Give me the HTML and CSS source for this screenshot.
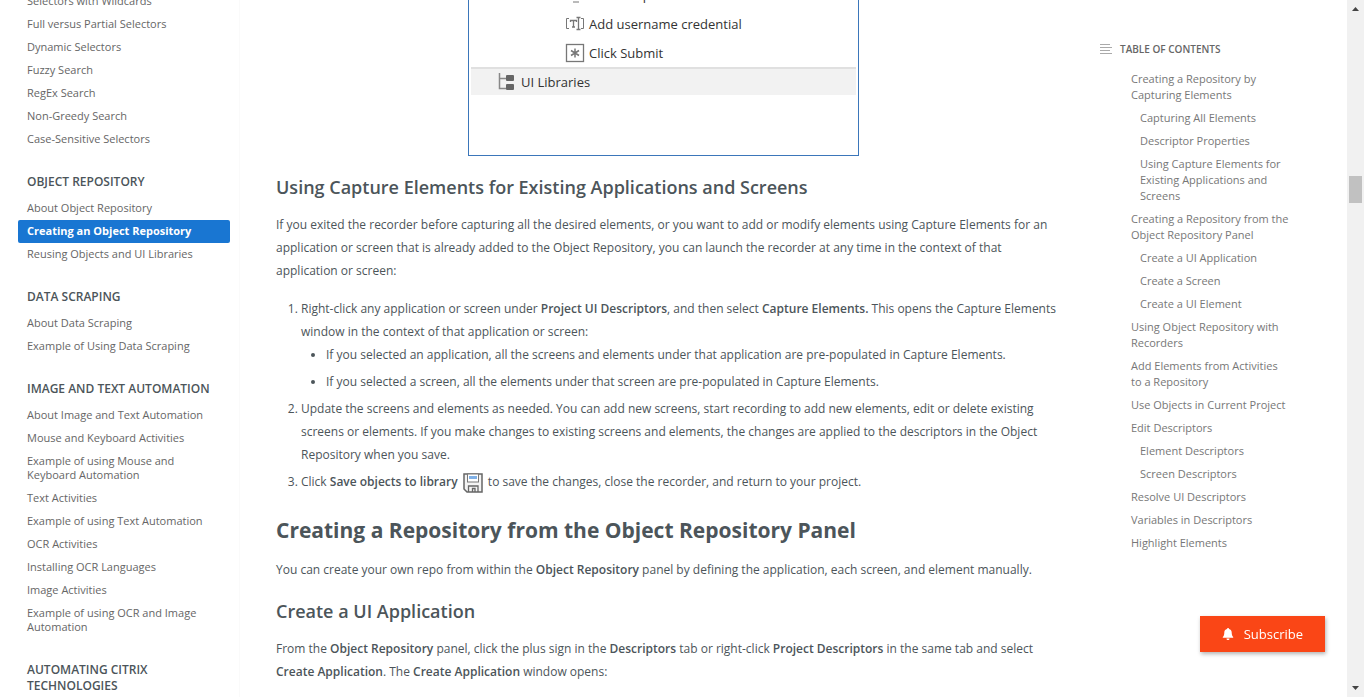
FILE: index.html
```
<!DOCTYPE html>
<html lang="en">
<head>
<meta charset="utf-8">
<title>Creating an Object Repository</title>
<link rel="stylesheet" href="styles.css">
</head>
<body>
<div class="page">
  <nav class="sidebar" aria-label="Documentation">
    <ul class="nav-list">
      <li><a href="#">Selectors with Wildcards</a></li>
      <li><a href="#">Full versus Partial Selectors</a></li>
      <li><a href="#">Dynamic Selectors</a></li>
      <li><a href="#">Fuzzy Search</a></li>
      <li><a href="#">RegEx Search</a></li>
      <li><a href="#">Non-Greedy Search</a></li>
      <li><a href="#">Case-Sensitive Selectors</a></li>
    </ul>
    <h4 class="nav-title">Object Repository</h4>
    <ul class="nav-list">
      <li><a href="#">About Object Repository</a></li>
      <li><a href="#" class="active" aria-current="page">Creating an Object Repository</a></li>
      <li><a href="#">Reusing Objects and UI Libraries</a></li>
    </ul>
    <h4 class="nav-title">Data Scraping</h4>
    <ul class="nav-list">
      <li><a href="#">About Data Scraping</a></li>
      <li><a href="#">Example of Using Data Scraping</a></li>
    </ul>
    <h4 class="nav-title">Image and Text Automation</h4>
    <ul class="nav-list">
      <li><a href="#">About Image and Text Automation</a></li>
      <li><a href="#">Mouse and Keyboard Activities</a></li>
      <li><a href="#">Example of using Mouse and Keyboard Automation</a></li>
      <li><a href="#">Text Activities</a></li>
      <li><a href="#">Example of using Text Automation</a></li>
      <li><a href="#">OCR Activities</a></li>
      <li><a href="#">Installing OCR Languages</a></li>
      <li><a href="#">Image Activities</a></li>
      <li><a href="#">Example of using OCR and Image Automation</a></li>
    </ul>
    <h4 class="nav-title">Automating Citrix Technologies</h4>
  </nav>

  <main class="content">
    <div class="figure">
      <div class="tree-panel">
        <div class="tree-row tree-leaf">
          <svg class="tree-icon" viewBox="0 0 20 20" aria-hidden="true"><path d="M8 17H14" fill="none" stroke="#777"/></svg>
          <span>Click Dropdown</span>
        </div>
        <div class="tree-row tree-leaf">
          <svg class="tree-icon" viewBox="0 0 20 20" fill="none" stroke="#777" aria-hidden="true"><path d="M4 4.500H1.500V14.500H4M16 4.500H18.500V14.500H16"/><path d="M5.500 8V6.500H11.500V8M8.500 6.500V13M7 13H10" stroke-width="1.300"/><path d="M11.500 3.500H15.500M13.500 3.500V15.500M11.500 15.500H15.500" stroke-width="1.300"/></svg>
          <span>Add username credential</span>
        </div>
        <div class="tree-row tree-leaf">
          <svg class="tree-icon" viewBox="0 0 20 20" fill="none" stroke="#777" aria-hidden="true"><rect x="1.500" y="1.500" width="17" height="17" stroke-width="1.300"/><path d="M10 5.500V14.500M6 7.500L14 12.500M14 7.500L6 12.500" stroke-width="1.500"/></svg>
          <span>Click Submit</span>
        </div>
        <div class="tree-row tree-root">
          <svg class="tree-icon" viewBox="0 0 20 20" aria-hidden="true"><path d="M2.500 1V16.500H9M2.500 6.500H9" fill="none" stroke="#888" stroke-width="1.500"/><rect x="9" y="3" width="8" height="6" rx="1" fill="#666"/><rect x="9" y="12" width="8" height="6" rx="1" fill="#666"/></svg>
          <span>UI Libraries</span>
        </div>
      </div>
    </div>

    <h3>Using Capture Elements for Existing Applications and Screens</h3>
    <p>If you exited the recorder before capturing all the desired elements, or you want to add or modify elements using Capture Elements for an application or screen that is already added to the Object Repository, you can launch the recorder at any time in the context of that application or screen:</p>
    <ol>
      <li>Right-click any application or screen under <strong>Project UI Descriptors</strong>, and then select <strong>Capture Elements.</strong> This opens the Capture Elements window in the context of that application or screen:
        <ul>
          <li>If you selected an application, all the screens and elements under that application are pre-populated in Capture Elements.</li>
          <li>If you selected a screen, all the elements under that screen are pre-populated in Capture Elements.</li>
        </ul>
      </li>
      <li>Update the screens and elements as needed. You can add new screens, start recording to add new elements, edit or delete existing screens or elements. If you make changes to existing screens and elements, the changes are applied to the descriptors in the Object Repository when you save.</li>
      <li>Click <strong>Save objects to library</strong> <svg class="save-icon" viewBox="0 0 20 20" aria-hidden="true"><path d="M1 1H19V19H4L1 16Z" fill="#f4f4f4" stroke="#666" stroke-width="1.500"/><rect x="4.500" y="1" width="11" height="8" fill="#fff" stroke="#777"/><rect x="6" y="3" width="8" height="3" fill="#7fb0e6"/><path d="M5.500 19V13H15V19M9.500 19V15.500H12V19" fill="none" stroke="#666" stroke-width="1.300"/></svg> to save the changes, close the recorder, and return to your project.</li>
    </ol>
    <h2>Creating a Repository from the Object Repository Panel</h2>
    <p>You can create your own repo from within the <strong>Object Repository</strong> panel by defining the application, each screen, and element manually.</p>
    <h3>Create a UI Application</h3>
    <p>From the <strong>Object Repository</strong> panel, click the plus sign in the <strong>Descriptors</strong> tab or right-click <strong>Project Descriptors</strong> in the same tab and select <strong>Create Application</strong>. The <strong>Create Application</strong> window opens:</p>
  </main>

  <aside class="toc" aria-labelledby="toc-title">
    <div class="toc-head">
      <svg class="toc-icon" viewBox="0 0 12 12" aria-hidden="true"><path d="M0 1.500H10M0 4.500H12M0 7.500H10M0 10.500H12" stroke="#aaa" fill="none"/></svg>
      <h4 id="toc-title">Table of Contents</h4>
    </div>
    <ul class="toc-list">
      <li><a href="#">Creating a Repository by Capturing Elements</a></li>
      <li class="sub"><a href="#">Capturing All Elements</a></li>
      <li class="sub"><a href="#">Descriptor Properties</a></li>
      <li class="sub"><a href="#">Using Capture Elements for Existing Applications and Screens</a></li>
      <li><a href="#">Creating a Repository from the Object Repository Panel</a></li>
      <li class="sub"><a href="#">Create a UI Application</a></li>
      <li class="sub"><a href="#">Create a Screen</a></li>
      <li class="sub"><a href="#">Create a UI Element</a></li>
      <li><a href="#">Using Object Repository with Recorders</a></li>
      <li><a href="#">Add Elements from Activities to&nbsp;a&nbsp;Repository</a></li>
      <li><a href="#">Use Objects in Current Project</a></li>
      <li><a href="#">Edit Descriptors</a></li>
      <li class="sub"><a href="#">Element Descriptors</a></li>
      <li class="sub"><a href="#">Screen Descriptors</a></li>
      <li><a href="#">Resolve UI Descriptors</a></li>
      <li><a href="#">Variables in Descriptors</a></li>
      <li><a href="#">Highlight Elements</a></li>
    </ul>
  </aside>

  <div class="scrollbar" aria-hidden="true">
    <svg class="arrow" viewBox="0 0 17 17"><path d="M5 11L8.500 7L12 11Z" fill="#444"/></svg>
    <div class="track"><div class="thumb"></div></div>
    <svg class="arrow" viewBox="0 0 17 17"><path d="M5 6L8.500 10L12 6Z" fill="#444"/></svg>
  </div>
</div>
<button class="subscribe" type="button">
  <svg class="bell" viewBox="0 0 12 12" aria-hidden="true"><path d="M6 0C6.600 0 7 .4 7 .9C8.800 1.300 9.700 2.700 9.700 4.500C9.700 7 10.200 8 11.200 9V9.700H.8V9C1.800 8 2.300 7 2.300 4.500C2.300 2.700 3.200 1.300 5 .9C5 .4 5.400 0 6 0ZM4.500 10.400H7.500C7.500 11.400 6.900 12 6 12S4.500 11.400 4.500 10.400Z" fill="#fff"/></svg>
  Subscribe
</button>
</body>
</html>
```
FILE: styles.css
```
* { box-sizing: border-box; }
body {
  margin: 0;
  height: 100vh;
  overflow: hidden;
  background: #fff;
  color: #4c555a;
  font: 12px/23px "Open Sans", "Noto Sans", sans-serif;
}
a { color: inherit; text-decoration: none; }
ul { list-style: none; margin: 0; padding: 0; }
h2, h3, h4, p { margin: 0; }
strong { font-weight: 600; }

.page { display: flex; height: 100vh; overflow: hidden; }

.sidebar {
  flex: 0 0 240px;
  margin-top: -10px;
  padding: 0 9px 0 18px;
  font-size: 11px;
  line-height: 14px;
  color: #666;
  border-right: 1px solid #fafafa;
}
.nav-list a { display: block; padding: 4px 9px 5px; }
.nav-list .active {
  background: #1976d2;
  border-radius: 2px;
  color: #fff;
  font-weight: 700;
}
.nav-title {
  margin: 23px 0 7px;
  padding: 0 60px 0 9px;
  font-size: 12px;
  line-height: 16px;
  font-weight: 600;
  color: #4c555a;
  text-transform: uppercase;
}
.nav-title:nth-of-type(3) { padding-right: 0; }

.content { flex: 1; min-width: 0; padding: 0 24px 0 36px; }
.figure { padding-right: 12px; }
.tree-panel {
  width: 391px;
  height: 177px;
  margin: -21px auto 19px;
  padding: 0 2px;
  border: 1px solid #3b76ba;
  color: #333;
  font-size: 13px;
  line-height: 26px;
}
.tree-row { display: flex; align-items: center; gap: 4px; }
.tree-leaf { padding-left: 94px; height: 29px; }
.tree-root { padding-left: 26px; gap: 4px; background: #f2f2f2; border-top: 2px solid #e0e0e0; }
.tree-icon { width: 20px; height: 20px; }

h3 { font-size: 18px; line-height: 24px; font-weight: 600; margin-bottom: 14px; }
h2 { font-size: 21px; line-height: 30px; font-weight: 700; margin: 22px 0 13px; }
.content p { margin-bottom: 15px; }
.content p + h3 { margin-top: 18px; }
ol { margin: 0; padding-left: 25px; }
ol > li { margin-bottom: 4px; }
.content ul { list-style: disc; padding-left: 25px; }
.content ul li { margin-bottom: 4px; }
.save-icon { width: 20px; height: 20px; margin: 0 2px; vertical-align: middle; }

.toc { flex: 0 0 260px; padding: 40px 50px 0 13px; font-size: 11px; line-height: 16px; color: #777; }
.toc-head { display: flex; align-items: center; gap: 8px; height: 18px; margin-bottom: 13px; }
.toc-head h4 { font-size: 10px; font-weight: 600; text-transform: uppercase; color: #666; }
.toc-icon { width: 12px; height: 12px; }
.toc-list { padding-left: 31px; }
.toc-list li { margin-bottom: 7px; }
.toc-list .sub { padding-left: 9px; }

.scrollbar { flex: 0 0 17px; display: flex; flex-direction: column; background: #f1f1f1; }
.arrow { width: 17px; height: 17px; }
.track { flex: 1; padding: 159px 2px 0; }
.thumb { height: 27px; background: #c1c1c1; }

.subscribe {
  position: fixed;
  right: 39px;
  bottom: 45px;
  display: flex;
  align-items: center;
  gap: 10px;
  height: 36px;
  padding: 0 22px;
  border: 0;
  background: #fa4616;
  color: #fff;
  font: 500 13px/20px "Open Sans", "Noto Sans", sans-serif;
  box-shadow: 1px 2px 4px rgba(0, 0, 0, .3);
}
.bell { width: 12px; height: 12px; }
```
